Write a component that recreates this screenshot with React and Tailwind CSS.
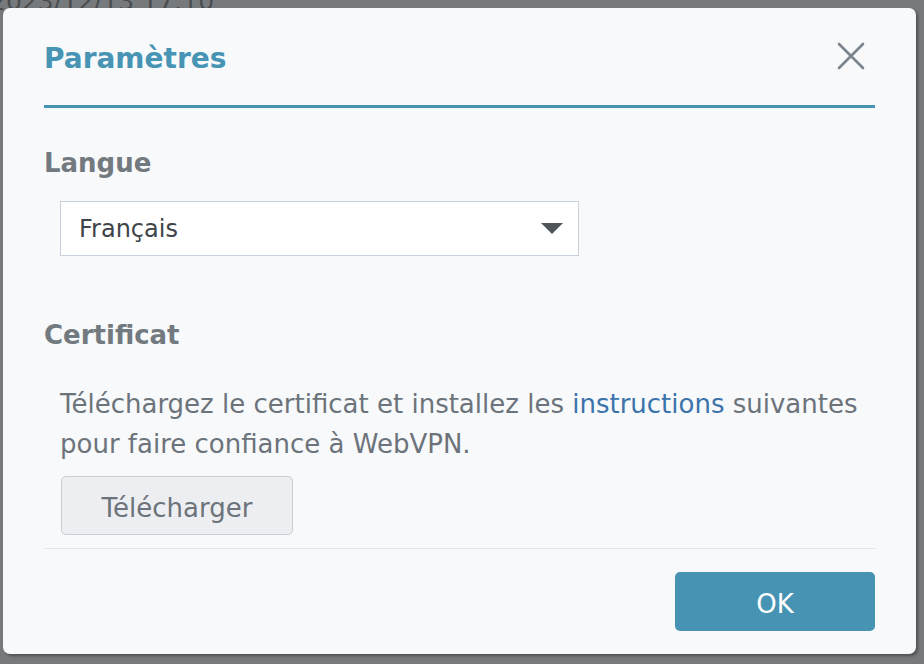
import React from 'react';

// Settings dialog shown over a dimmed page.

export default function App() {
  return (
    <div
      className="relative w-[924px] h-[664px] overflow-hidden bg-[#777a7d]"
      style={{ fontFamily: '"DejaVu Sans", "Noto Sans", sans-serif' }}
    >
      <div className="absolute left-[-10px] top-[-17px] text-[25px] text-[#4a4d50] whitespace-nowrap">2023/12/13 17:10</div>

      <div className="absolute left-[3px] top-[8px] w-[913px] h-[646px] rounded-[7px] bg-[#f7f9fb] shadow-[2px_2px_3px_rgba(0,0,0,0.35)] flex flex-col px-[41px]">
        <div className="flex items-center justify-between h-[100px] pt-[5px] border-b-[3px] border-[#4793b3]">
          <h1 className="text-[28px] font-bold text-[#4794b4]">Paramètres</h1>
          <svg width="30" height="30" viewBox="0 0 30 30" className="mr-[9px] mt-[-6px]">
            <path d="M3 3 L27 27 M27 3 L3 27" stroke="#7b838c" strokeWidth="2.6" strokeLinecap="round" />
          </svg>
        </div>

        <div className="mt-[37px] text-[26px] font-bold text-[#72797f] leading-[36px]">Langue</div>
        <div className="mt-[20px] ml-[16px] w-[519px] h-[55px] bg-white border border-[#c8d2dc] flex items-center justify-between pl-[18px] pr-[15px]">
          <span className="text-[24px] text-[#3e4449]">Français</span>
          <svg width="22" height="12" viewBox="0 0 22 12">
            <path d="M0 0 H22 L11 11 Z" fill="#51565b" />
          </svg>
        </div>

        <div className="mt-[61px] text-[26px] font-bold text-[#72797f] leading-[36px]">Certificat</div>
        <p className="mt-[31px] ml-[16px] text-[26px] leading-[40px] text-[#6c737a] whitespace-nowrap">
          Téléchargez le certificat et installez les <span className="text-[#3b73aa]">instructions</span> suivantes
          <br />
          pour faire confiance à WebVPN.
        </p>
        <div className="mt-[12px] ml-[17px]">
          <button className="w-[232px] h-[59px] pt-[6px] rounded-[5px] bg-[#eceef2] border border-[#c9ced5] text-[26px] text-[#6c737a]">
            Télécharger
          </button>
        </div>
        <div className="mt-[13px] h-px bg-[#e4e7ea]" />
        <div className="mt-[23px] flex justify-end">
          <button className="w-[200px] h-[59px] pt-[6px] rounded-[5px] bg-[#4793b3] text-[26px] text-white">OK</button>
        </div>
      </div>
    </div>
  );
}
